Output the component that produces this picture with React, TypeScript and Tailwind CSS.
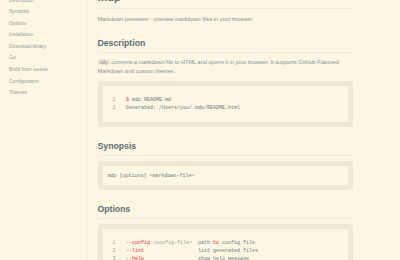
import React from "react";

const nav = [
  "Description",
  "Synopsis",
  "Options",
  "Installation",
  "Download binary",
  "Go",
  "Build from source",
  "Configuration",
  "Themes",
];

const sans = { fontFamily: '"Liberation Sans", Arial, sans-serif' };
const mono = { fontFamily: '"Liberation Mono", "Courier New", monospace' };

function H2({ children }: { children: React.ReactNode }) {
  return (
    <h2 className="mt-[13.5px] border-b border-[#efe9d6] pb-[3.5px] text-[8.7px] font-bold leading-[11px] text-[#586e75]">
      {children}
    </h2>
  );
}

export default function App() {
  return (
    <div className="flex h-[260px] w-[400px] overflow-hidden bg-[#fdf6e3]" style={sans}>
      <aside className="w-[87px] shrink-0 border-r border-[#efe9d6]">
        <ul className="mt-[-5.3px] pl-[9px]">
          {nav.map((n) => (
            <li key={n} className="text-[5px] leading-[11.55px] text-[#93a1a1]">
              {n}
            </li>
          ))}
        </ul>
      </aside>
      <main className="ml-[10.5px] w-[255px] shrink-0">
        <h1 className="mt-[-9px] border-b border-[#efe9d6] pb-[5px] text-[11px] font-bold leading-[12px] text-[#586e75]">
          mdp
        </h1>
        <p className="mt-[5.5px] text-[5.6px] leading-[9px] text-[#839496]">
          Markdown previewer - preview markdown files in your browser.
        </p>
        <h2 className="mt-[14px] border-b border-[#efe9d6] pb-[3.5px] text-[8.7px] font-bold leading-[11px] text-[#586e75]">
          Description
        </h2>
        <p className="mt-[4.5px] text-[5.6px] leading-[9px] text-[#839496]">
          <code className="rounded-[1px] bg-[#eee8d5] px-[2px] py-[0.5px] text-[4.6px]" style={mono}>
            mdp
          </code>{" "}
          converts a markdown file to HTML and opens it in your browser. It supports GitHub Flavored Markdown and
          custom themes.
        </p>
        <div className="mt-[5.5px] rounded-[2px] bg-[#eee8d5] p-[5px]">
          <div className="rounded-[1px] bg-[#fdf6e3] px-[10px] py-[10px] text-[5px] leading-[8px] text-[#657b83]" style={mono}>
            <div className="flex whitespace-pre">
              <span className="w-[13.5px] text-[#93a1a1]">1</span>
              <span>
                <span className="text-[#d33682]">$</span> mdp README.md
              </span>
            </div>
            <div className="flex whitespace-pre">
              <span className="w-[13.5px] text-[#93a1a1]">2</span>
              <span>Generated: /Users/you/.mdp/README.html</span>
            </div>
          </div>
        </div>
        <H2>Synopsis</H2>
        <div className="mt-[5px] rounded-[2px] bg-[#eee8d5] p-[5px]">
          <div className="rounded-[1px] bg-[#fdf6e3] px-[5px] py-[5.5px] text-[5px] leading-[8px] text-[#657b83]" style={mono}>
            <div className="whitespace-pre">mdp [options] &lt;markdown-file&gt;</div>
          </div>
        </div>
        <H2>Options</H2>
        <div className="mt-[5px] rounded-[2px] bg-[#eee8d5] p-[5px]">
          <div className="rounded-[1px] bg-[#fdf6e3] px-[10px] py-[10px] text-[5px] leading-[8px] text-[#657b83]" style={mono}>
            <div className="flex whitespace-pre">
              <span className="w-[13.5px] text-[#93a1a1]">1</span>
              <span>
                <span className="text-[#dc322f]">--config</span> <span className="text-[#93a1a1]">&lt;config-file&gt;</span>
                {"  path "}
                <span className="text-[#dc322f]">to</span>
                {" config file"}
              </span>
            </div>
            <div className="flex whitespace-pre">
              <span className="w-[13.5px] text-[#93a1a1]">2</span>
              <span>
                <span className="text-[#dc322f]">--list</span>
                {"                  list generated files"}
              </span>
            </div>
            <div className="flex whitespace-pre">
              <span className="w-[13.5px] text-[#93a1a1]">3</span>
              <span>
                <span className="text-[#dc322f]">--help</span>
                {"                  show help message"}
              </span>
            </div>
          </div>
        </div>
      </main>
    </div>
  );
}
